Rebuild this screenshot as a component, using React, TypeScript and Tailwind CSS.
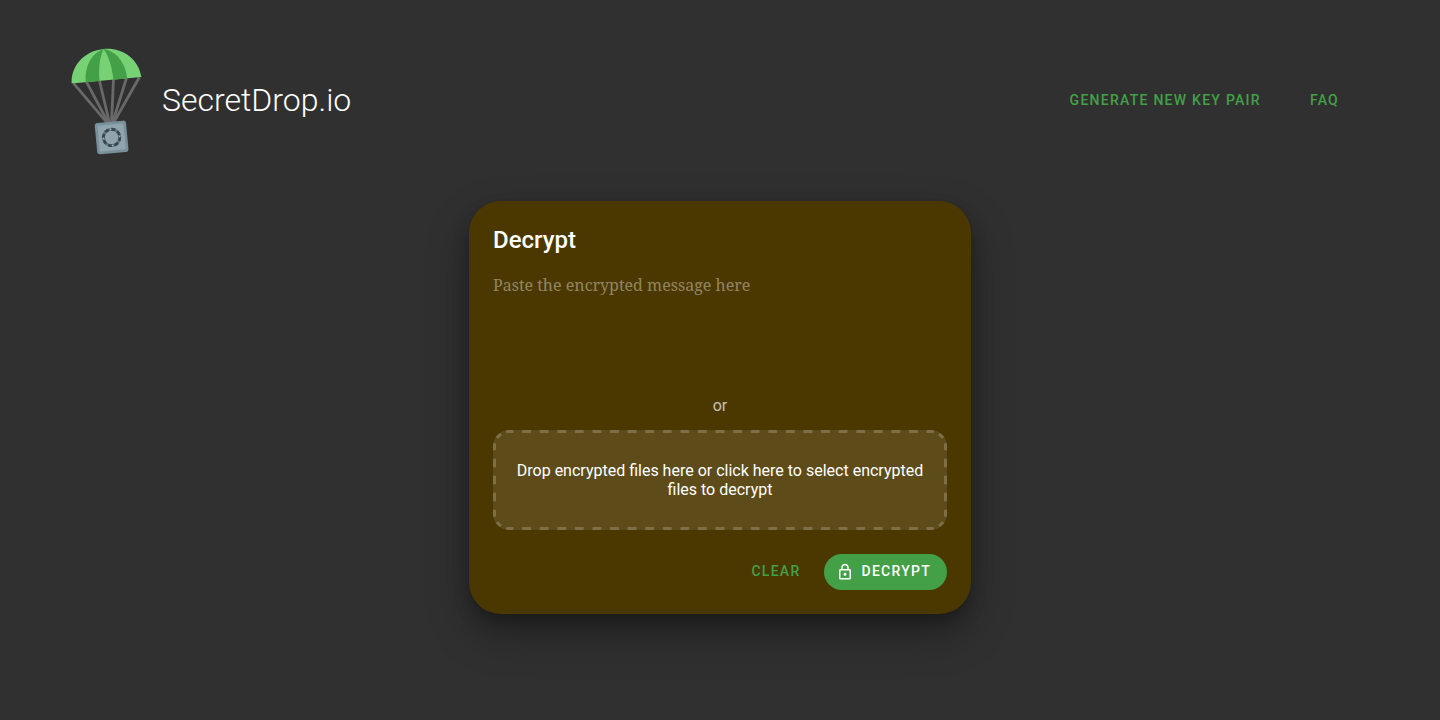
import { useState } from "react";

function Logo() {
  const cords = [
    [-33, -3],
    [-20, -2],
    [-7, -1],
    [7, 1],
    [20, 2],
    [33, 3],
  ];
  return (
    <svg className="h-[108px] w-[72px] shrink-0" viewBox="0 0 72 108" aria-hidden="true">
      <g transform="translate(35.5 33.3) rotate(-5.4)">
        <g stroke="#696969" strokeWidth="2.8">
          {cords.map(([top, bottom]) => (
            <line key={top} x1={top} y1="0" x2={bottom} y2="43" />
          ))}
        </g>
        <path d="M-35 0C-34-19-18-31.5 0-31.5S34-19 35 0Z" fill="#76d275" />
        <path d="M-20.8 0C-20.8-15-13-28 0-31.5C-4-25-6.9-14-6.9 0Z" fill="#43a047" />
        <path d="M20.8 0C20.8-15 13-28 0-31.5C4-25 6.9-14 6.9 0Z" fill="#43a047" />
        <rect x="-16" y="41.7" width="31.4" height="31.4" rx="3" fill="#78909c" />
        <rect x="-13.3" y="44.4" width="26" height="26" rx="1" fill="#90a4ae" />
        <circle cx="-0.3" cy="57.4" r="8.2" fill="none" stroke="#607884" strokeWidth="2.8" />
        <circle
          cx="-0.3"
          cy="57.4"
          r="8.2"
          fill="none"
          stroke="#37474f"
          strokeWidth="2.8"
          strokeDasharray="4.2 2.24"
        />
        <g fill="#b0bec5">
          <circle cx="-0.3" cy="49.2" r="0.7" />
          <circle cx="-0.3" cy="65.6" r="0.7" />
          <circle cx="-8.5" cy="57.4" r="0.7" />
          <circle cx="7.9" cy="57.4" r="0.7" />
        </g>
      </g>
    </svg>
  );
}

function LockIcon() {
  return (
    <svg className="size-[18px]" viewBox="0 0 24 24" fill="currentColor" aria-hidden="true">
      <path d="M12 17c1.1 0 2-.9 2-2s-.9-2-2-2-2 .9-2 2 .9 2 2 2zm6-9h-1V6c0-2.76-2.24-5-5-5S7 3.24 7 6v2H6c-1.1 0-2 .9-2 2v10c0 1.1.9 2 2 2h12c1.1 0 2-.9 2-2V10c0-1.1-.9-2-2-2zM8.9 6c0-1.71 1.39-3.1 3.1-3.1s3.1 1.39 3.1 3.1v2H8.9V6zM18 20H6V10h12v10z" />
    </svg>
  );
}

/* Long, evenly spaced dashes: each edge and corner holds a whole number of periods. */
function DashedOutline() {
  const segments: [string, number][] = [
    ["M16 1.5H438", 24],
    ["M452.5 16V84", 4],
    ["M438 98.5H16", 24],
    ["M1.5 84V16", 4],
    ["M1.5 16A14.5 14.5 0 0 1 16 1.5", 2],
    ["M438 1.5A14.5 14.5 0 0 1 452.5 16", 2],
    ["M452.5 84A14.5 14.5 0 0 1 438 98.5", 2],
    ["M16 98.5A14.5 14.5 0 0 1 1.5 84", 2],
  ];
  return (
    <svg
      className="pointer-events-none absolute inset-0 size-full"
      viewBox="0 0 454 100"
      preserveAspectRatio="none"
      fill="none"
      stroke="#ffffff"
      strokeOpacity="0.2"
      strokeWidth="3"
      aria-hidden="true"
    >
      {segments.map(([d, periods]) => (
        <path key={d} d={d} pathLength={periods} strokeDasharray="0.5 0.5" strokeDashoffset="0.25" />
      ))}
    </svg>
  );
}

const label = "text-sm font-medium uppercase tracking-[0.09em]";

export default function App() {
  const [message, setMessage] = useState("");

  return (
    <div className="min-h-screen bg-[#303030] font-['Roboto',sans-serif] text-white">
      <header className="flex items-center justify-between px-[71px] pt-[47px]">
        <a href="#home" className="flex items-center gap-[19px]">
          <Logo />
          <h1 className="pb-0.5 text-[32px] leading-10 font-light">SecretDrop.io</h1>
        </a>
        <nav className="flex items-center gap-[33px] pr-[22px] pb-0.5">
          <a href="#generate" className={`flex h-9 items-center px-2 text-[#43a047] ${label}`}>
            Generate new key pair
          </a>
          <a href="#faq" className={`flex h-9 items-center px-2 text-[#43a047] ${label}`}>
            FAQ
          </a>
        </nav>
      </header>

      <main className="px-6 pt-[46px] pb-12">
        <section className="mx-auto flex max-w-[502px] flex-col rounded-[32px] bg-[#4b3800] p-6 shadow-[0_8px_16px_rgba(0,0,0,0.25),0_19px_44px_rgba(0,0,0,0.3)]">
          <h2 className="text-2xl leading-[30px] font-medium">Decrypt</h2>
          <textarea
            aria-label="Encrypted message"
            placeholder="Paste the encrypted message here"
            value={message}
            onChange={(event) => setMessage(event.target.value)}
            className="mt-[18px] h-[113px] w-full resize-none bg-transparent font-['Roboto_Slab','Noto_Serif','DejaVu_Serif',serif] text-base text-white outline-none placeholder:text-white/40"
          />
          <p className="mt-2 text-center text-base text-white/70">or</p>
          <button
            type="button"
            className="relative mt-3 flex h-[100px] items-center justify-center rounded-2xl bg-white/10 px-[23px] text-center text-base leading-[19px]"
          >
            <DashedOutline />
            Drop encrypted files here or click here to select encrypted files to decrypt
          </button>
          <div className="mt-6 flex justify-end gap-4">
            <button
              type="button"
              onClick={() => setMessage("")}
              className={`h-9 px-2 pb-0.5 text-[#43a047] ${label}`}
            >
              Clear
            </button>
            <button
              type="button"
              className={`flex h-9 items-center gap-[7px] rounded-full bg-[#43a047] pr-4 pl-3 text-white ${label}`}
            >
              <LockIcon />
              <span className="pb-0.5">Decrypt</span>
            </button>
          </div>
        </section>
      </main>
    </div>
  );
}
